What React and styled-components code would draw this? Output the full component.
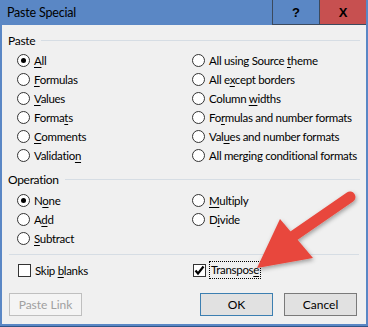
import styled, { createGlobalStyle } from "styled-components";

const Global = createGlobalStyle`
  html, body { margin: 0; padding: 0; background: #fff; }
  body {
    font-family: Lato, "Liberation Sans", sans-serif;
    font-size: 11.5px;
    letter-spacing: -0.3px;
    color: #000;
  }
`

const Window = styled.div`
  position: relative;
  width: 368px;
  height: 327px;
  box-sizing: border-box;
  background: #5a87c5;
  padding: 0 2px 3px;
  display: flex;
  flex-direction: column;
  box-shadow: inset 0 -1px 0 #2f5588;
`

const TitleBar = styled.div`
  height: 25px;
  display: flex;
  align-items: stretch;
  flex-shrink: 0;
`

const Title = styled.div`
  flex: 1;
  display: flex;
  align-items: center;
  padding-left: 5px;
  font-size: 12.5px;
  letter-spacing: -0.2px;
  color: #000;
`

const CaptionBtn = styled.div`
  width: 46px;
  display: flex;
  align-items: center;
  justify-content: center;
  background: ${p => p.$bg};
  border-left: 1px solid #3b4a5e;
  border-bottom: 1px solid #3b4a5e;
  font-family: "Liberation Sans", Arial, sans-serif;
  font-weight: bold;
  font-size: 13px;
  letter-spacing: 0;
  color: #000;
`

const Body = styled.div`
  flex: 1;
  background: #f0f0f0;
  padding: 7px 6px 0;
  display: flex;
  flex-direction: column;
`

const Group = styled.div`
  display: flex;
  align-items: center;
  height: 16px;
  font-size: 12px;
  margin-top: ${p => p.$top || 0}px;

  &::after {
    content: "";
    flex: 1;
    height: 1px;
    background: #d6dde4;
    margin-left: 6px;
  }
`

const Grid = styled.div`
  display: grid;
  grid-template-columns: 175px 1fr;
  grid-auto-rows: 19px;
  margin: ${p => p.$top || 0}px 0 0 9px;
`

const Option = styled.label`
  display: flex;
  align-items: center;
  gap: 4px;
  white-space: nowrap;
`

const Radio = styled.span`
  position: relative;
  width: 13px;
  height: 13px;
  box-sizing: border-box;
  border-radius: 50%;
  border: 1px solid #333;
  background: #fff;
  flex-shrink: 0;

  &::after {
    content: "";
    display: ${p => (p.$checked ? "block" : "none")};
    position: absolute;
    left: 3px;
    top: 3px;
    width: 5px;
    height: 5px;
    border-radius: 50%;
    background: #000;
  }
`

const Box = styled.span`
  width: 13px;
  height: 13px;
  box-sizing: border-box;
  border: 1px solid #333;
  background: #fff;
  margin-left: 1px;
  flex-shrink: 0;
  display: flex;
  align-items: center;
  justify-content: center;
`

const Key = styled.span`
  text-decoration: underline;
  text-underline-offset: 2px;
`

const Focus = styled.span`
  outline: 1px dotted #000;
  outline-offset: 0;
  padding: 0 1px;
  line-height: 16px;
`

const Separator = styled.div`
  height: 1px;
  background: #d6dde4;
  margin: 6px 1px 0;
`

const CheckRow = styled(Grid)`
  grid-auto-rows: 16px;
`

const Buttons = styled.div`
  display: flex;
  justify-content: space-between;
  margin: 15px 3px 0 1px;
`

const Right = styled.div`
  display: flex;
  gap: 11px;
`

const Button = styled.div`
  width: 73px;
  height: 23px;
  box-sizing: border-box;
  display: flex;
  align-items: center;
  justify-content: center;
  font-size: 12px;
  letter-spacing: 0;
  background: ${p => (p.$disabled ? "#f4f4f4" : "#e1e1e1")};
  border: 1px solid ${p => (p.$default ? "#3c7fb1" : p.$disabled ? "#bfbfbf" : "#7a7a7a")};
  color: ${p => (p.$disabled ? "#a0a0a0" : "#000")};
`

const Arrow = styled.svg`
  position: absolute;
  left: 0;
  top: 0;
  pointer-events: none;
`

const Label = ({ text, k }) => {
  if (k == null) return <span>{text}</span>
  return <span>{text.slice(0, k)}<Key>{text[k]}</Key>{text.slice(k + 1)}</span>
}

const pasteLeft = [["All", 0, true], ["Formulas", 0], ["Values", 0], ["Formats", 5], ["Comments", 0], ["Validation", 9]]
const pasteRight = [["All using Source theme", 17], ["All except borders", 5], ["Column widths", 7], ["Formulas and number formats", 2], ["Values and number formats", 3], ["All merging conditional formats", null]]

const App = () => {
  const paste = []
  pasteLeft.forEach((l, i) => {
    paste.push(l)
    paste.push(pasteRight[i])
  })
  const ops = [["None", 1, true], ["Multiply", 0], ["Add", 1], ["Divide", 1], ["Subtract", 0], null]

  return <>
    <Global />
    <Window>
      <TitleBar>
        <Title>Paste Special</Title>
        <CaptionBtn $bg="#5a87c5">?</CaptionBtn>
        <CaptionBtn $bg="#c75050">X</CaptionBtn>
      </TitleBar>
      <Body>
        <Group>Paste</Group>
        <Grid $top={3}>
          {paste.map(([t, k, c]) => (
            <Option key={t}><Radio $checked={c} /><Label text={t} k={k} /></Option>
          ))}
        </Grid>
        <Group $top={6}>Operation</Group>
        <Grid $top={4}>
          {ops.map((o, i) => o
            ? <Option key={o[0]}><Radio $checked={o[2]} /><Label text={o[0]} k={o[1]} /></Option>
            : <span key={i} />)}
        </Grid>
        <Separator />
        <CheckRow $top={7}>
          <Option><Box /><Label text="Skip blanks" k={5} /></Option>
          <Option>
            <Box>
              <svg width="11" height="11" viewBox="0 0 11 11">
                <path d="M1.5 5.5 L4 8.5 L9.5 1.5" fill="none" stroke="#000" strokeWidth="2.2" />
              </svg>
            </Box>
            <Focus><Label text="Transpose" k={8} /></Focus>
          </Option>
        </CheckRow>
        <Buttons>
          <Button $disabled>Paste Link</Button>
          <Right>
            <Button $default>OK</Button>
            <Button>Cancel</Button>
          </Right>
        </Buttons>
      </Body>
      <Arrow width="368" height="327" viewBox="0 0 368 327">
        <defs>
          <filter id="sh" x="-20%" y="-20%" width="140%" height="140%">
            <feDropShadow dx="1" dy="2" stdDeviation="2" floodColor="#000" floodOpacity="0.35" />
          </filter>
        </defs>
        <g filter="url(#sh)" fill="#e8473c">
          <line x1="350" y1="197" x2="292" y2="237" stroke="#e8473c" strokeWidth="11" strokeLinecap="round" />
          <polygon points="257,268 280,219 313,258" />
        </g>
      </Arrow>
    </Window>
  </>
}

export default App
